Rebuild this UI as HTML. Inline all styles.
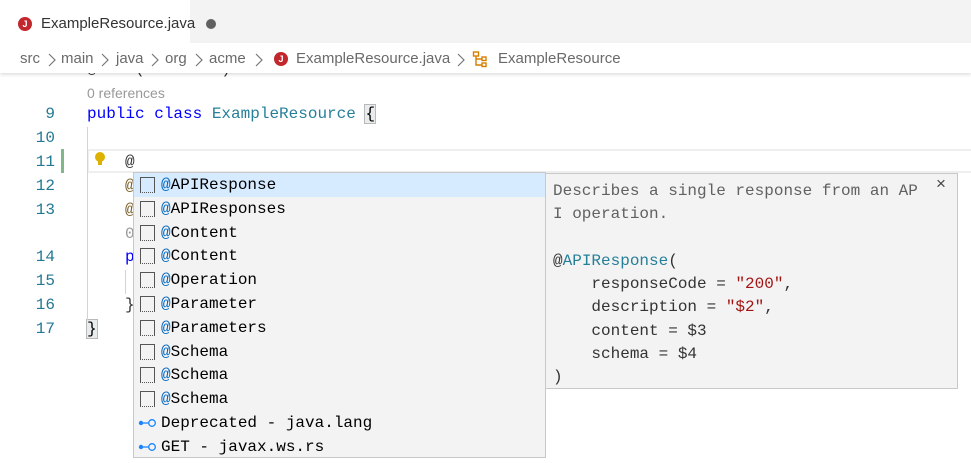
<!DOCTYPE html>
<html><head><meta charset="utf-8"><style>
*{margin:0;padding:0;box-sizing:border-box}
body{width:971px;height:463px;overflow:hidden;background:#fff;position:relative;font-family:"Liberation Sans",sans-serif}
.abs{position:absolute}
.mono{font-family:"Liberation Mono",monospace;font-size:16px;white-space:pre}
.ln{position:absolute;left:0;width:55px;text-align:right;color:#237893;font-family:"Liberation Mono",monospace;font-size:16px}
.sug{position:absolute;left:133px;top:172px;width:413px;height:286px;background:#f3f3f3;border:1px solid #c8c8c8;font-family:"Liberation Mono",monospace;font-size:16px;overflow:hidden}
.row{height:23.8px;line-height:25px;position:relative;padding-left:27px;white-space:nowrap}
.row .ic{position:absolute;left:6px;top:4px;width:15px;height:16px;border:1px solid #555;border-bottom:1px dotted #555;background:#f3f3f3}
.at{color:#0066bf}
.row.sel{background:#d6ebff}
.row.sel .ic{background:#d6ebff}
.det{position:absolute;left:546px;top:173px;width:412px;height:216px;background:#f3f3f3;border:1px solid #c8c8c8;border-left:none;padding:6px 0 0 7px;line-height:23.3px;color:#333}
.bc{position:absolute;top:50px;font-size:15px;color:#6a6a6a;z-index:4;white-space:pre}
.sep{position:absolute;top:53px;z-index:4}
</style></head><body>
<div class="abs" style="left:0;top:0;width:971px;height:43px;background:#f3f3f3"></div>
<div class="abs" style="left:0;top:0;width:190px;height:43px;background:#fff"></div>
<div class="abs" style="left:18px;top:17px;width:14px;height:14px;border-radius:50%;background:#c1272d;color:#fff;font-size:9px;font-weight:bold;text-align:center;line-height:14px">J</div>
<div class="abs" style="left:41px;top:15px;font-size:15px;color:#333">ExampleResource.java</div>
<div class="abs" style="left:206px;top:19px;width:10px;height:10px;border-radius:50%;background:#616161"></div>
<div class="abs" style="left:0;top:43px;width:971px;height:30px;background:#fff;box-shadow:0 2px 3px rgba(0,0,0,.12);z-index:3"></div>
<div class="bc" style="left:20px">src</div>
<div class="bc" style="left:61px">main</div>
<div class="bc" style="left:116px">java</div>
<div class="bc" style="left:165px">org</div>
<div class="bc" style="left:209px">acme</div>
<svg class="sep" style="left:47px" width="10" height="14"><path d="M2 1l6 6-6 6" fill="none" stroke="#777" stroke-width="1.2"/></svg>
<svg class="sep" style="left:100px" width="10" height="14"><path d="M2 1l6 6-6 6" fill="none" stroke="#777" stroke-width="1.2"/></svg>
<svg class="sep" style="left:150px" width="10" height="14"><path d="M2 1l6 6-6 6" fill="none" stroke="#777" stroke-width="1.2"/></svg>
<svg class="sep" style="left:194px" width="10" height="14"><path d="M2 1l6 6-6 6" fill="none" stroke="#777" stroke-width="1.2"/></svg>
<svg class="sep" style="left:254px" width="10" height="14"><path d="M2 1l6 6-6 6" fill="none" stroke="#777" stroke-width="1.2"/></svg>
<div class="abs" style="left:274px;top:52px;width:14px;height:14px;border-radius:50%;background:#c1272d;color:#fff;font-size:9px;font-weight:bold;text-align:center;line-height:14px;z-index:4">J</div>
<div class="bc" style="left:296px">ExampleResource.java</div>
<svg class="sep" style="left:456px" width="10" height="14"><path d="M2 1l6 6-6 6" fill="none" stroke="#777" stroke-width="1.2"/></svg>
<svg class="abs" style="left:472px;top:50px;z-index:4" width="18" height="18" viewBox="0 0 18 18"><g fill="none" stroke="#d67e00" stroke-width="1.4"><rect x="1.5" y="2" width="5" height="4"/><rect x="10" y="7" width="4" height="3.5"/><rect x="10" y="13" width="4" height="3.5"/><path d="M4 6v9h6M4 9h6"/></g></svg>
<div class="bc" style="left:498px">ExampleResource</div>

<div class="abs mono" style="left:87px;top:60px;color:#333">@Path("/hello")</div>
<div class="abs" style="left:87px;top:85px;font-size:14px;color:#999">0 references</div>
<div class="ln" style="top:105px">9</div>
<div class="abs mono" style="left:87px;top:105px"><span style="color:#0000ff">public class</span> <span style="color:#267f99">ExampleResource</span> <span style="outline:1px solid #b9b9b9;background:#e8ecec">{</span></div>
<div class="ln" style="top:129px">10</div>
<div class="abs" style="left:87px;top:149px;width:884px;height:24px;border:2px solid #eee;border-right:none"></div>
<div class="abs" style="left:61px;top:149px;width:3px;height:24px;background:#81b88b"></div>
<div class="ln" style="top:153px">11</div>
<svg class="abs" style="left:94px;top:151px" width="12" height="16" viewBox="0 0 12 16"><circle cx="6" cy="6" r="5" fill="#ddb100"/><rect x="4" y="10" width="4" height="4" fill="#ddb100"/></svg>
<div class="abs mono" style="left:125px;top:153px;color:#333">@</div>
<div class="ln" style="top:177px">12</div>
<div class="abs mono" style="left:125px;top:177px;color:#795e26">@</div>
<div class="ln" style="top:201px">13</div>
<div class="abs mono" style="left:125px;top:201px;color:#795e26">@</div>
<div class="abs mono" style="left:125px;top:225px;color:#999">0</div>
<div class="ln" style="top:248px">14</div>
<div class="abs mono" style="left:125px;top:248px;color:#0000ff">p</div>
<div class="ln" style="top:272px">15</div>
<div class="ln" style="top:296px">16</div>
<div class="abs mono" style="left:125px;top:296px;color:#333">}</div>
<div class="ln" style="top:320px">17</div>
<div class="abs mono" style="left:87px;top:320px;outline:1px solid #b9b9b9;background:#e8ecec">}</div>
<div class="abs" style="left:87px;top:127px;width:1px;height:193px;background:#d3d3d3"></div>
<div class="abs" style="left:125px;top:270px;width:1px;height:24px;background:#d3d3d3"></div>

<div class="sug"><div class="row sel"><span class="ic"></span><span class="at">@</span>APIResponse</div><div class="row"><span class="ic"></span><span class="at">@</span>APIResponses</div><div class="row"><span class="ic"></span><span class="at">@</span>Content</div><div class="row"><span class="ic"></span><span class="at">@</span>Content</div><div class="row"><span class="ic"></span><span class="at">@</span>Operation</div><div class="row"><span class="ic"></span><span class="at">@</span>Parameter</div><div class="row"><span class="ic"></span><span class="at">@</span>Parameters</div><div class="row"><span class="ic"></span><span class="at">@</span>Schema</div><div class="row"><span class="ic"></span><span class="at">@</span>Schema</div><div class="row"><span class="ic"></span><span class="at">@</span>Schema</div><div class="row"><svg style="position:absolute;left:4px;top:7px" width="20" height="10" viewBox="0 0 20 10"><circle cx="3" cy="5" r="2.2" fill="#1a85ff"/><path d="M5 5h6" stroke="#1a85ff" stroke-width="1.3"/><circle cx="14" cy="5" r="3.3" fill="none" stroke="#1a85ff" stroke-width="1.3"/></svg>Deprecated - java.lang</div><div class="row"><svg style="position:absolute;left:4px;top:7px" width="20" height="10" viewBox="0 0 20 10"><circle cx="3" cy="5" r="2.2" fill="#1a85ff"/><path d="M5 5h6" stroke="#1a85ff" stroke-width="1.3"/><circle cx="14" cy="5" r="3.3" fill="none" stroke="#1a85ff" stroke-width="1.3"/></svg>GET - javax.ws.rs</div></div>

<div class="det mono"><span style="color:#616161">Describes a single response from an AP
I operation.</span>

@<span style="color:#267f99">APIResponse</span>(
    responseCode = <span style="color:#a31515">"200"</span>,
    description = <span style="color:#a31515">"$2"</span>,
    content = $3
    schema = $4
)</div>
<div class="abs" style="left:936px;top:174px;font-size:17px;color:#444">×</div>
</body></html>
